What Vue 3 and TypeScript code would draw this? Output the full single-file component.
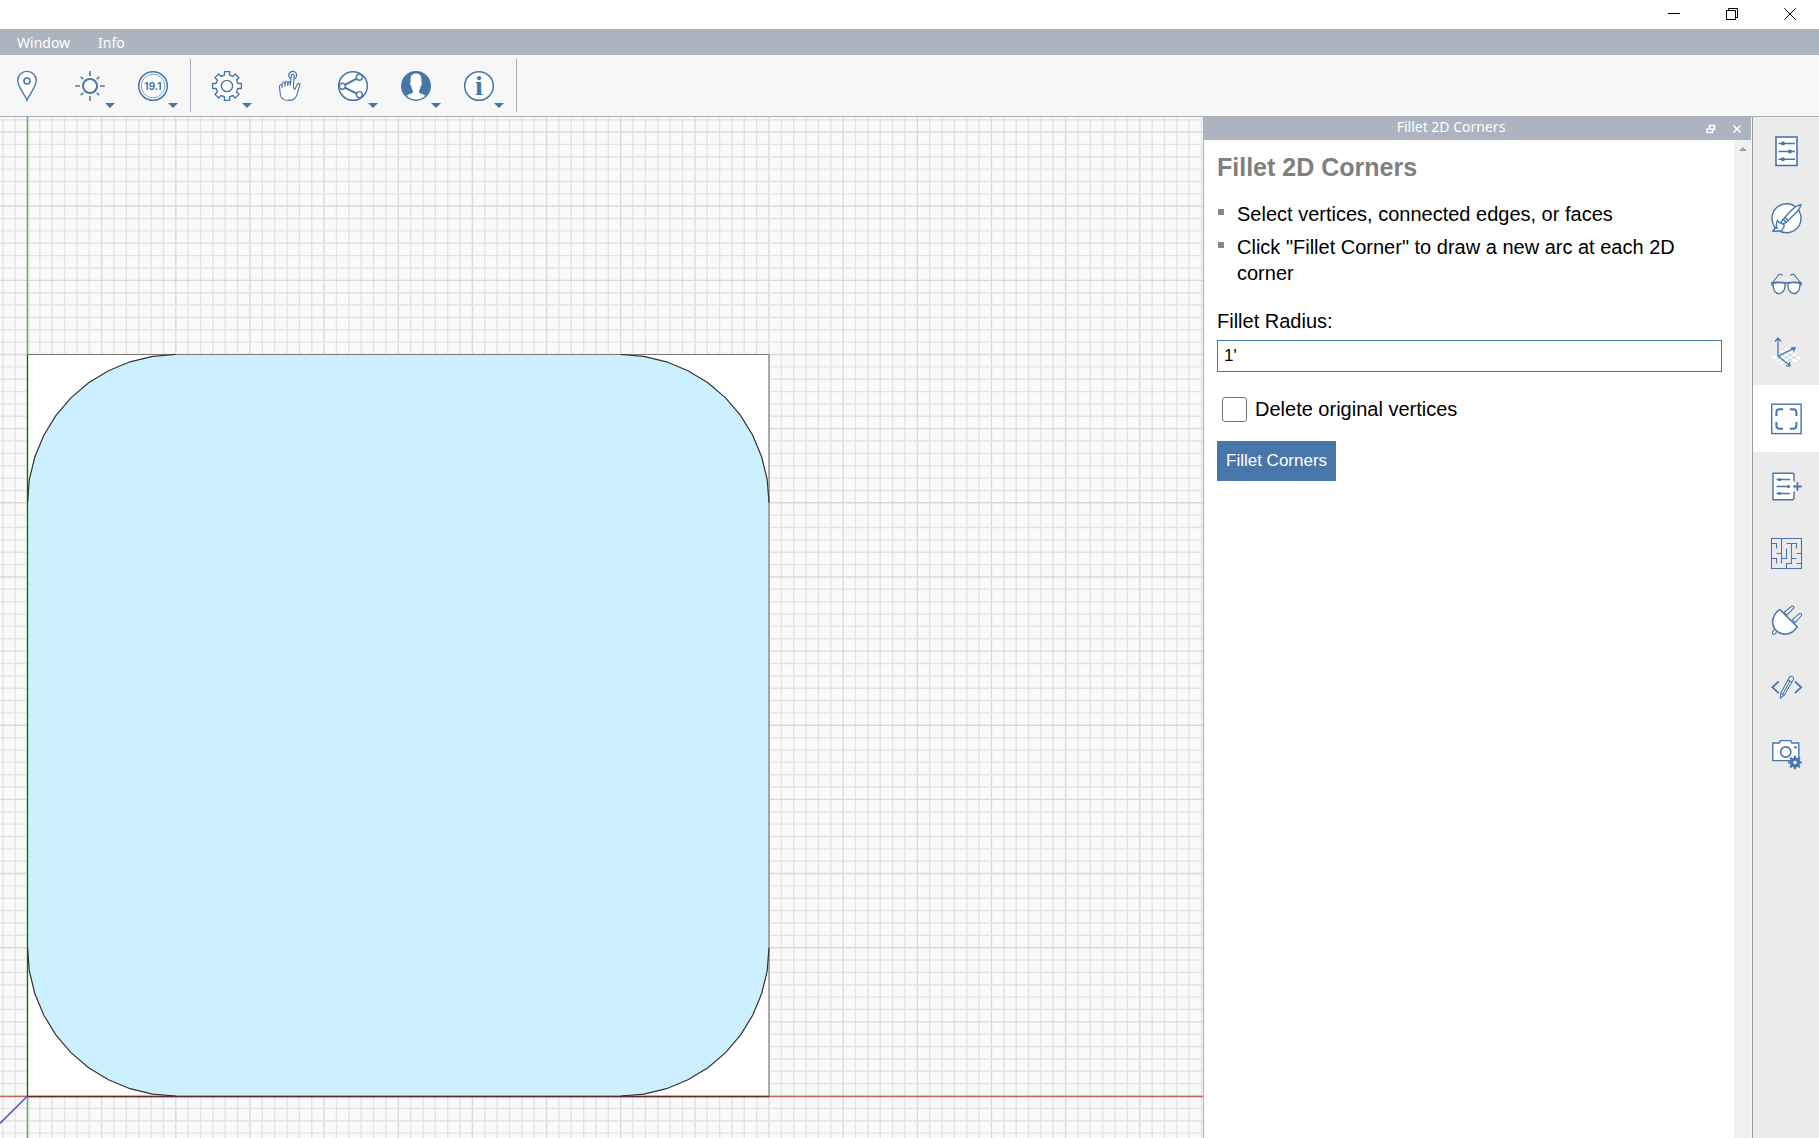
<script setup lang="ts">
import { ref } from 'vue'

const radius = ref("1'")
const deleteOriginal = ref(false)

// Drawing plane: pixels per foot and the origin inside the canvas
const FOOT = 148.3
const ORIGIN = { x: 27.5, y: 979 }
const SIDE = FOOT * 5
const INCH = FOOT / 12

interface GridLine {
  at: number
  major: boolean
}

function gridLines(origin: number, from: number, to: number): GridLine[] {
  const lines: GridLine[] = []
  for (let i = from; i <= to; i++) {
    lines.push({ at: origin + i * INCH, major: i % 6 === 0 })
  }
  return lines
}

const columns = gridLines(ORIGIN.x, -2, 300)
const rows = gridLines(ORIGIN.y, -79, 120)

const left = ORIGIN.x
const right = ORIGIN.x + SIDE
const bottom = ORIGIN.y
const top = ORIGIN.y - SIDE

// Each fillet is a quarter circle of ten straight segments
function fillet(cx: number, cy: number, startDeg: number): string[] {
  return Array.from({ length: 11 }, (_, i) => {
    const a = ((startDeg + i * 9) * Math.PI) / 180
    return `${(cx + FOOT * Math.cos(a)).toFixed(1)},${(cy + FOOT * Math.sin(a)).toFixed(1)}`
  })
}

const corners = [
  fillet(left + FOOT, top + FOOT, 180),
  fillet(right - FOOT, top + FOOT, 270),
  fillet(right - FOOT, bottom - FOOT, 0),
  fillet(left + FOOT, bottom - FOOT, 90),
]
const facePoints = corners.flat().join(' ')

function gearPath(cx: number, cy: number, outer: number, inner: number, half: number, base: number): string {
  const pts: string[] = []
  for (let i = 0; i < 8; i++) {
    const mid = i * 45 - 90
    const steps: [number, number][] = [
      [mid - base, inner],
      [mid - half, outer],
      [mid + half, outer],
      [mid + base, inner],
    ]
    for (const [deg, r] of steps) {
      const a = (deg * Math.PI) / 180
      pts.push(`${(cx + r * Math.cos(a)).toFixed(2)} ${(cy + r * Math.sin(a)).toFixed(2)}`)
    }
  }
  return `M${pts.join('L')}Z`
}

const settingsGear = gearPath(16, 16, 14.6, 11.2, 10, 13)
const cameraGear = gearPath(25, 24.5, 6.9, 5.2, 10, 12)
</script>

<template>
  <div class="app">
    <header class="titlebar">
      <button class="win" aria-label="Minimize">
        <svg viewBox="0 0 12 12"><path d="M0 5.5H12" /></svg>
      </button>
      <button class="win" aria-label="Restore">
        <svg viewBox="0 0 12 12"><path d="M.5 2.5H9.5V11.5H.5ZM2.5 2.5V.5H11.5V9.5H9.5" /></svg>
      </button>
      <button class="win" aria-label="Close">
        <svg viewBox="0 0 12 12"><path d="M.3 .3L11.7 11.7M11.7 .3L.3 11.7" /></svg>
      </button>
    </header>

    <nav class="menubar">
      <button>Window</button>
      <button>Info</button>
    </nav>

    <div class="toolbar">
      <button class="tool" aria-label="Location">
        <svg class="icon" viewBox="0 0 32 32">
          <path class="solid" d="M16 30C14 24.5 6.8 17.5 6.8 10.6A9.2 9.2 0 0 1 25.2 10.6C25.2 17.5 18 24.5 16 30Z" />
          <circle cx="16" cy="11" r="3" stroke-width="1.6" />
        </svg>
      </button>
      <button class="tool" aria-label="Sun">
        <svg class="icon" viewBox="0 0 32 32">
          <circle class="solid" cx="16" cy="16" r="7" stroke-width="2" />
          <path d="M16 1.3V6M16 26V30.7M1.3 16H6M26 16H30.7M6.8 6.8L9.2 9.2M22.8 22.8L25.2 25.2M6.8 25.2L9.2 22.8M22.8 9.2L25.2 6.8" stroke-width="1.6" />
        </svg>
        <span class="caret"></span>
      </button>
      <button class="tool" aria-label="Version 19.1">
        <svg class="icon" viewBox="0 0 32 32">
          <circle class="solid" cx="16" cy="16" r="14.3" stroke-width="1.5" />
          <circle cx="16" cy="16" r="11.8" stroke-width="0.7" />
          <text class="version" x="16" y="19.6">19.1</text>
        </svg>
        <span class="caret"></span>
      </button>
      <span class="divider"></span>
      <button class="tool" aria-label="Settings">
        <svg class="icon" viewBox="0 0 32 32">
          <path class="solid" :d="settingsGear" stroke-linejoin="round" />
          <circle cx="16" cy="16" r="5.6" />
        </svg>
        <span class="caret"></span>
      </button>
      <button class="tool" aria-label="Touch">
        <svg class="icon" viewBox="0 0 32 32">
          <circle cx="18.7" cy="5.3" r="3.9" stroke-width="1.3" />
          <path class="solid" stroke-width="1.1" d="M17.3 5.2Q18.7 3.4 20.2 5.2L19.4 17.4L20.8 19.4L23.6 13.9Q25 12.8 26 14.2L23.6 22.6Q22 30.2 15.5 30.4Q7.4 30.5 6.4 25L5.4 16.4Q5.4 14.8 6.7 14.7Q7.9 14.8 8.2 18.2L8.1 13.8Q8.4 12.2 9.6 12.3Q10.7 12.4 10.9 16.6L11.3 12.2Q11.8 11 12.9 11.4Q13.8 11.8 13.7 16L14.4 12.4Q15 11.2 16 11.8L16.4 15.6Z" />
        </svg>
      </button>
      <button class="tool" aria-label="Share">
        <svg class="icon" viewBox="0 0 32 32">
          <circle class="solid" cx="16" cy="16" r="14.3" stroke-width="1.5" />
          <path d="M8 14.8L19.6 8.6M8 17.6L19.6 23.6" stroke-width="2" />
          <circle class="solid" cx="5.3" cy="16.2" r="3" />
          <circle class="solid" cx="22.3" cy="7.3" r="3" />
          <circle class="solid" cx="22.3" cy="24.6" r="3" />
        </svg>
        <span class="caret"></span>
      </button>
      <button class="tool" aria-label="Account">
        <svg class="icon" viewBox="0 0 32 32">
          <circle class="solid" cx="16" cy="16" r="14.3" stroke-width="1.4" />
          <path class="fill" d="M6.5 26.3A14.2 14.2 0 1 1 25.5 26.3C24 23.8 19.2 24 18.9 21.6C19.4 20 20.6 18.2 20.9 15.6C22.2 14.6 22.2 12.4 21.3 11.4C22.1 5.5 19.6 3.6 16 3.6C12.4 3.6 9.9 5.5 10.7 11.4C9.8 12.4 9.8 14.6 11.1 15.6C11.4 18.2 12.6 20 13.1 21.6C12.8 24 8 23.8 6.5 26.3Z" />
        </svg>
        <span class="caret"></span>
      </button>
      <button class="tool" aria-label="Information">
        <svg class="icon" viewBox="0 0 32 32">
          <circle class="solid" cx="16" cy="16" r="14.3" stroke-width="1.5" />
          <text class="info" x="16" y="25">i</text>
        </svg>
        <span class="caret"></span>
      </button>
      <span class="divider"></span>
    </div>

    <main class="workspace">
      <section class="canvas" aria-label="Drawing canvas">
        <svg class="scene">
          <g class="grid">
            <line v-for="c in columns" :key="'c' + c.at" :class="{ major: c.major }" :x1="c.at" :x2="c.at" y1="0" y2="100%" />
            <line v-for="r in rows" :key="'r' + r.at" :class="{ major: r.major }" x1="0" x2="100%" :y1="r.at" :y2="r.at" />
          </g>
          <rect :x="left" :y="top" :width="SIDE" :height="SIDE" fill="#fff" />
          <polygon :points="facePoints" fill="#ccf0ff" />
          <line class="axis-y" :x1="left" :x2="left" y1="0" y2="100%" />
          <line class="axis-x" x1="0" x2="100%" :y1="bottom + 0.5" :y2="bottom + 0.5" />
          <line class="axis-z" :x1="left" :y1="bottom" x2="0" :y2="bottom + left" />
          <line class="edge" :x1="left" :x2="right" :y1="top" :y2="top" />
          <line class="edge" :x1="right" :x2="right" :y1="top" :y2="bottom" />
          <line class="edge-left" :x1="left" :x2="left" :y1="top" :y2="bottom" />
          <line class="edge-bottom" :x1="left" :x2="right" :y1="bottom + 0.5" :y2="bottom + 0.5" />
          <polyline v-for="(c, i) in corners" :key="i" class="arc" :points="c.join(' ')" />
        </svg>
      </section>

      <aside class="panel">
        <div class="panel-bar">
          <span class="panel-title">Fillet 2D Corners</span>
          <button aria-label="Float panel">
            <svg viewBox="0 0 10 10"><path d="M1 5H6.5V8.5H1ZM3.5 4V1.5H8.5V5.5H7M1 5H6.5M3.5 1.5H8.5" /></svg>
          </button>
          <button aria-label="Close panel">
            <svg viewBox="0 0 10 10"><path d="M1.5 1.5L8.5 8.5M8.5 1.5L1.5 8.5" /></svg>
          </button>
        </div>
        <div class="panel-main">
          <form class="panel-content" @submit.prevent>
            <h1>Fillet 2D Corners</h1>
            <ul>
              <li>Select vertices, connected edges, or faces</li>
              <li>Click "Fillet Corner" to draw a new arc at each 2D corner</li>
            </ul>
            <label class="field-label" for="radius">Fillet Radius:</label>
            <input id="radius" v-model="radius" class="field" type="text" />
            <div class="check">
              <input id="delete-original" v-model="deleteOriginal" type="checkbox" />
              <label for="delete-original">Delete original vertices</label>
            </div>
            <button class="primary" type="submit">Fillet Corners</button>
          </form>
          <div class="scrollbar"><span></span></div>
        </div>
      </aside>

      <nav class="sidebar">
        <button aria-label="Properties">
          <svg class="icon" viewBox="0 0 32 32">
            <rect class="solid" x="6" y="2" width="21" height="28.5" stroke-width="1.6" />
            <path d="M8.5 8.5H25M8.5 16.5H25M8.5 24.3H25" />
            <g class="fill"><circle cx="13" cy="8.5" r="2" /><circle cx="20" cy="16.5" r="2" /><circle cx="13" cy="24.3" r="2" /></g>
          </svg>
        </button>
        <button aria-label="Materials">
          <svg class="icon" viewBox="0 0 32 32">
            <circle class="solid" cx="16.5" cy="16.3" r="14.5" />
            <path class="solid" d="M30.8 2.6Q26 3.6 21.5 8.2L13.2 17.3L16.2 20.3L25 11.8Q30 7.2 30.8 2.6ZM15 15.4L18.2 18.4M12.8 17.6Q10.5 19.5 11.2 21.3Q13.4 22.6 16 20.2" />
            <path class="solid" d="M7.4 18.6L9.2 20.8L11 20.6L14.2 23.2Q14.4 26 11.2 29L2.4 29.2Q5.2 27.8 4.7 26.4L7 26.2Q5.5 22 7.4 18.6Z" />
          </svg>
        </button>
        <button aria-label="Visual styles">
          <svg class="icon" viewBox="0 0 32 32">
            <path d="M1.8 14.5L8.8 5.6Q10.6 4.9 12.8 6.2M31.2 14.5L24.2 5.6Q22.4 4.9 20.2 6.2" stroke-width="1.1" />
            <path class="solid" d="M3 14.4Q9.2 13 15 14.2Q15.6 23.6 9.5 24.6Q3 24.8 3 14.4ZM30 14.4Q23.8 13 18 14.2Q17.4 23.6 23.5 24.6Q30 24.8 30 14.4Z" stroke-width="1.3" />
            <path d="M1.6 13.6Q9 12.6 16.5 14Q24 12.6 31.4 13.6L31 16L30 16.4M1.6 13.6L2 16L3 16.4" stroke-width="1.3" />
          </svg>
        </button>
        <button aria-label="Levels">
          <svg class="icon" viewBox="0 0 32 32">
            <path class="solid-fill" d="M1.5 21.5L17 11.5L31.5 22L16 31.5Z" />
            <path class="lattice-lines" d="M5.1 24L20.6 14M8.8 26.5L24.3 16.5M12.4 29L27.9 19M5.4 19L19.9 29M9.3 16.5L23.8 26.5M13.1 14L27.6 24" />
            <path d="M8 20V2.5M5 5.5L8 2L11 5.5M8 20L24.8 12.2M21 12L25.2 12L23.6 15.6M8 20L19.8 29.6M15.6 29.8H20L19.4 25.6" stroke-width="1.3" />
          </svg>
        </button>
        <button class="active" aria-label="Fillet tools">
          <svg class="icon" viewBox="0 0 32 32">
            <rect class="solid" x="1.7" y="1.2" width="29.4" height="29.4" />
            <path stroke-width="2" d="M6.4 13V9.5Q6.4 6.2 9.6 6.2H13M19.8 6.2H23.2Q26.4 6.2 26.4 9.5V13M26.4 19V22.5Q26.4 25.8 23.2 25.8H19.8M13 25.8H9.6Q6.4 25.8 6.4 22.5V19" />
          </svg>
        </button>
        <button aria-label="Add properties">
          <svg class="icon" viewBox="0 0 32 32">
            <path class="solid-fill" d="M3 3H24V30H3Z" />
            <path d="M24 11.5V4.6Q24 3.2 22.6 3.2H3V29.8H22.6Q24 29.8 24 28.4V21.5M6.5 9.5H20M6.5 16.5H20M6.5 23.5H20" />
            <path d="M23.2 16.5H31.6M27.4 12.2V20.8" stroke-width="1.8" />
            <g class="fill"><circle cx="9.5" cy="9.5" r="1.6" /><circle cx="18.5" cy="16.5" r="1.6" /><circle cx="9.5" cy="23.5" r="1.6" /></g>
          </svg>
        </button>
        <button aria-label="Floor plan">
          <svg class="icon" viewBox="0 0 32 32">
            <path stroke-width="1.1" d="M1.5 1.5H31.5V31.5H1.5ZM1.5 6.5H6.5V11.5M11.5 1.5V26.5M6.5 16.5H11.5M1.5 21.5H6.5V26.5M11.5 21.5H16.5V11.5M16.5 6.5H26.5V11.5M21.5 6.5V26.5H16.5V31.5M26.5 16.5H31.5M21.5 21.5H26.5M26.5 26.5H31.5" />
          </svg>
        </button>
        <button aria-label="Plugins">
          <svg class="icon" viewBox="0 0 32 32">
            <path class="solid" stroke-width="1.1" d="M14.2 8.2L21.6 2.2Q24 1.6 23.8 4L17 10.9ZM22.4 15.8L29.4 9.6Q31.8 9.2 31.4 11.6L25 18.6ZM5.2 24.6L3 27Q1.6 29.6 3.4 30.4Q5.2 30.6 7.2 27Z" />
            <path class="solid" d="M10 5.6L27.2 22.8Q23 29.4 15.6 30.2Q8.6 30 4.8 25Q1.4 20 3.2 14Q5.6 7.6 10 5.6Z" stroke-width="1.5" />
          </svg>
        </button>
        <button aria-label="Scripting">
          <svg class="icon" viewBox="0 0 32 32">
            <path d="M8.8 10.4L2.4 16.3L8.8 22.2M24.8 10.4L31.2 16.3L24.8 22.2" stroke-width="1.8" />
            <path class="solid" stroke-width="1.1" d="M19.4 6.4Q20.4 4.8 22 5.6Q24 6.6 23.4 8.2L14.4 24L10.4 27L10.8 22.2ZM18 9L21.8 11M10.8 22.2L14.4 24M20 10L12.8 23" />
          </svg>
        </button>
        <button aria-label="Render settings">
          <svg class="icon" viewBox="0 0 32 32">
            <path class="solid" d="M2.8 5H9.4L10.4 2.6H20.8L21.8 5H28.8V22.6H2.8Z" />
            <circle cx="15.8" cy="14" r="5.1" stroke-width="1.6" />
            <circle class="fill" cx="25.4" cy="9.3" r="1.3" />
            <path class="fill" :d="cameraGear" />
            <circle class="solid-fill" cx="25" cy="24.5" r="1.8" />
          </svg>
        </button>
      </nav>
    </main>
  </div>
</template>

<style>
body {
  margin: 0;
}
</style>

<style scoped>
.app {
  display: flex;
  flex-direction: column;
  height: 100vh;
  background: #fff;
  font-family: "Liberation Sans", Arial, sans-serif;
  color: #000;
}

button {
  margin: 0;
  padding: 0;
  border: 0;
  background: none;
  font: inherit;
  color: inherit;
}

.titlebar {
  display: flex;
  justify-content: flex-end;
  flex: none;
  height: 29px;
}

.win {
  display: flex;
  align-items: center;
  justify-content: center;
  width: 58px;
  height: 28px;
}

.win svg {
  width: 12px;
  height: 12px;
  fill: none;
  stroke: #000;
  stroke-width: 1;
}

.menubar {
  display: flex;
  flex: none;
  gap: 28px;
  height: 26px;
  padding-left: 17px;
  background: #acb4bf;
  font: 14px/28px "Noto Sans", "Open Sans", sans-serif;
  color: #fff;
}

.toolbar {
  display: flex;
  flex: none;
  align-items: center;
  gap: 9px;
  height: 61px;
  background: #f7f7f7;
  border-bottom: 1px solid #a6b0c0;
}

.tool {
  position: relative;
  display: flex;
  align-items: center;
  justify-content: center;
  width: 54px;
  height: 61px;
}

.divider {
  width: 1px;
  height: 53px;
  margin-left: 1px;
  background: #a6b0c0;
}

.caret {
  position: absolute;
  right: 2px;
  bottom: 8px;
  border: 5px solid transparent;
  border-top-color: #4776ab;
  border-bottom-width: 0;
}

.icon {
  display: block;
  width: 32px;
  height: 32px;
  overflow: visible;
  fill: none;
  stroke: #4776ab;
  stroke-width: 1.4;
}

.solid {
  fill: #fff;
}

.solid-fill {
  fill: #fff;
  stroke: none;
}

.fill {
  fill: #4776ab;
  stroke: none;
}

.lattice-lines {
  stroke: #b9cce2;
  stroke-width: 1;
}

.version,
.info {
  fill: #4776ab;
  stroke: none;
  text-anchor: middle;
}

.version {
  font: 700 10px Inter, sans-serif;
}

.info {
  font: bold 28px "Liberation Serif", serif;
}

.workspace {
  display: flex;
  flex: 1;
  min-height: 0;
}

.canvas {
  flex: 1;
  min-width: 0;
  background: #fafafa;
  overflow: hidden;
}

.scene {
  display: block;
  width: 100%;
  height: 100%;
}

.grid line {
  stroke: #e4e4e4;
  stroke-width: 1.4;
}

.grid line.major {
  stroke: #dadada;
}

.axis-y {
  stroke: #5cb85c;
  stroke-width: 1.6;
}

.axis-x {
  stroke: #c9625f;
  stroke-width: 1.4;
}

.axis-z {
  stroke: #5a55c4;
  stroke-width: 1.6;
}

.edge {
  stroke: #7a7a7a;
  stroke-width: 1.2;
}

.edge-left {
  stroke: #1f5a20;
  stroke-width: 1;
}

.edge-bottom {
  stroke: #6b2626;
  stroke-width: 1.4;
}

.arc {
  fill: none;
  stroke: #333;
  stroke-width: 1.2;
}

.panel {
  display: flex;
  flex-direction: column;
  flex: none;
  width: 547px;
  background: #fff;
  border-left: 1px solid #acb4bf;
  border-right: 1px solid #f5f5f5;
}

.panel-bar {
  display: flex;
  align-items: center;
  flex: none;
  height: 23px;
  padding-right: 9px;
  background: #acb4bf;
  color: #fff;
}

.panel-title {
  flex: 1;
  padding-right: 8px;
  font: 14px/20px "Noto Sans", "Open Sans", sans-serif;
  text-align: center;
  height: 23px;
}

.panel-bar button + button {
  margin-left: 16px;
}

.panel-bar svg {
  display: block;
  width: 10px;
  height: 10px;
  fill: none;
  stroke: #fff;
  stroke-width: 1.5;
}

.panel-main {
  display: flex;
  flex: 1;
  min-height: 0;
}

.panel-content {
  flex: 1;
  padding: 13px 12px 0 13px;
  font-size: 20px;
  line-height: 26px;
}

h1 {
  margin: 0;
  font-size: 25px;
  line-height: 28px;
  color: #808080;
}

ul {
  margin: 20px 0 22px;
  padding: 0;
  list-style: none;
}

li {
  position: relative;
  padding-left: 20px;
}

li + li {
  margin-top: 7px;
}

li::before {
  content: "";
  position: absolute;
  top: 8px;
  left: 1px;
  width: 6px;
  height: 6px;
  background: #888;
}

.field-label {
  display: block;
}

.field {
  display: block;
  box-sizing: border-box;
  width: 100%;
  height: 32px;
  margin: 6px 0 24px;
  padding: 0 6px;
  border: 1px solid #4776ab;
  font: 17px "Liberation Sans", Arial, sans-serif;
  color: #000;
  outline: 0;
}

.check {
  display: flex;
  align-items: center;
  padding-left: 5px;
}

.check input {
  appearance: none;
  width: 25px;
  height: 25px;
  margin: 0 8px 0 0;
  border: 1px solid #767676;
  border-radius: 3px;
  background: #fff;
}

.primary {
  display: block;
  height: 40px;
  margin-top: 19px;
  padding: 0 9px;
  background: #4776ab;
  font-size: 17px;
  line-height: 40px;
  color: #fff;
}

.scrollbar {
  flex: none;
  width: 17px;
  padding-top: 7px;
  background: #f0f0f0;
}

.scrollbar span {
  display: block;
  width: 0;
  margin: 0 auto;
  border: 4px solid transparent;
  border-top-width: 0;
  border-bottom-color: #a0a0a0;
}

.sidebar {
  display: flex;
  flex-direction: column;
  flex: none;
  width: 66px;
  background: #ebebeb;
  border-left: 1px solid #999;
}

.sidebar button {
  height: 67px;
  padding: 18px 17px 17px;
}

.sidebar .active {
  background: #fff;
}
</style>
